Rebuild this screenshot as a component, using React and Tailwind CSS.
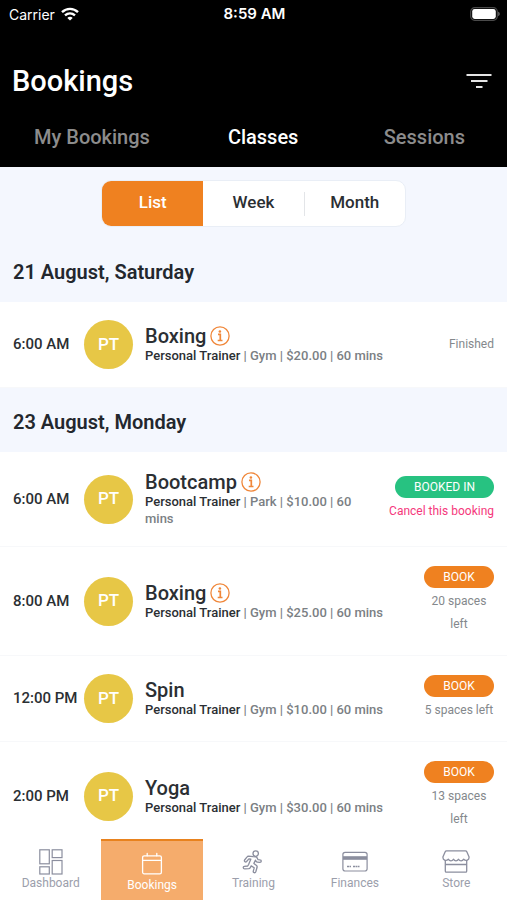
import React, { useState } from 'react';

const days = [
  {
    label: '21 August, Saturday',
    classes: [
      { time: '6:00 AM', name: 'Boxing', info: true, place: 'Gym', price: '$20.00', status: 'finished' },
    ],
  },
  {
    label: '23 August, Monday',
    classes: [
      { time: '6:00 AM', name: 'Bootcamp', info: true, place: 'Park', price: '$10.00', status: 'booked' },
      { time: '8:00 AM', name: 'Boxing', info: true, place: 'Gym', price: '$25.00', status: 'open', spaces: 20 },
      { time: '12:00 PM', name: 'Spin', place: 'Gym', price: '$10.00', status: 'open', spaces: 5 },
      { time: '2:00 PM', name: 'Yoga', place: 'Gym', price: '$30.00', status: 'open', spaces: 13 },
    ],
  },
];

const WifiIcon = () => (
  <svg width="18" height="14" viewBox="0 0 18 14" fill="none" stroke="white" strokeWidth="2.4" aria-hidden="true">
    <path d="M1 5.2C5.6.8 12.4.8 17 5.2" />
    <path d="M4 8.4c3-2.7 7-2.7 10 0" />
    <path d="M9 13.6 6.3 10.9c1.5-1.4 3.9-1.4 5.4 0z" fill="white" stroke="none" />
  </svg>
);

const BatteryIcon = () => (
  <svg width="30" height="14" viewBox="0 0 30 14" fill="none" aria-hidden="true">
    <rect x="0.7" y="0.7" width="26.6" height="12.6" rx="4" stroke="#4a4a4a" strokeWidth="1.2" />
    <rect x="2.2" y="2" width="23.6" height="10" rx="2.4" fill="white" />
    <path d="M28.2 4.8c2 .6 2 3.8 0 4.4z" fill="#6b6b6b" />
  </svg>
);

const FilterIcon = () => (
  <svg width="26" height="16" viewBox="0 0 26 16" fill="none" stroke="#e5e5e5" strokeWidth="1.9" aria-hidden="true">
    <path d="M0.5 2h25M5 8h16.5M10 14h6.5" />
  </svg>
);

const InfoIcon = () => (
  <svg width="20" height="20" viewBox="0 0 20 20" fill="none" stroke="#f0873a" aria-hidden="true">
    <circle cx="10" cy="10" r="9.1" strokeWidth="1.3" />
    <circle cx="9.9" cy="5.5" r="1.3" fill="#f0873a" stroke="none" />
    <path d="M8 8.4h2.3v6M7.7 14.5h4.8" strokeWidth="1.7" />
  </svg>
);

const DashboardIcon = () => (
  <svg width="26" height="26" viewBox="0 0 26 26" fill="none" stroke="#8b8e9e" strokeWidth="1.2" aria-hidden="true">
    <rect x="1.8" y="0.8" width="9.5" height="14" />
    <rect x="14.2" y="0.8" width="9.8" height="7.8" />
    <rect x="1.8" y="17.8" width="9.5" height="7.2" />
    <rect x="14.2" y="11.5" width="9.8" height="13.5" />
  </svg>
);

const CalendarIcon = () => (
  <svg width="26" height="26" viewBox="0 0 26 26" fill="none" stroke="white" strokeWidth="1.3" strokeLinecap="round" aria-hidden="true">
    <rect x="3.6" y="4.8" width="18.8" height="18" rx="1.6" />
    <path d="M3.6 9.4h18.8M8.2 2.4v2.4M17.8 2.4v2.4" />
  </svg>
);

const RunnerIcon = () => (
  <svg width="26" height="26" viewBox="0 0 26 26" fill="none" stroke="#8b8e9e" strokeWidth="1.3" strokeLinecap="round" strokeLinejoin="round" aria-hidden="true">
    <circle cx="15.7" cy="4.6" r="2.7" />
    <path d="M13 7.7 8.600 7.200c-.8 0-1.300.3-1.700.9L4.600 11c-.8 1.400 1 2.600 2 1.500l2.300-2.700 2 .3-2.200 5.200-1 1.700-3.300.3c-1.700.3-1.500 2.600.3 2.600l4.100-.3c.7-.1 1.100-.4 1.500-1l.9-1.700 3 1.900-.9 3.300c-.4 1.700 1.900 2.300 2.500.7l1.300-4.500c.2-.8 0-1.300-.6-1.800l-2.600-2.100 1.500-3.200.7 1.200c.3.5.7.7 1.300.7l2.600.2c1.600 0 1.700-2.300.1-2.400l-2-.2-1.300-2.300c-.4-.6-1-.7-3.800-.7z" />
  </svg>
);

const CardIcon = () => (
  <svg width="26" height="26" viewBox="0 0 26 26" fill="none" stroke="#8b8e9e" strokeWidth="1.2" aria-hidden="true">
    <rect x="0.9" y="3.4" width="24.2" height="18.6" rx="2.2" />
    <rect x="1" y="7.2" width="24" height="3.6" fill="#8b8e9e" stroke="none" />
    <path d="M5 17.5h4M11 17.5h6.5" strokeDasharray="2 .5" strokeWidth="1.3" />
  </svg>
);

const StoreIcon = () => (
  <svg width="28" height="26" viewBox="0 0 28 26" fill="none" stroke="#8b8e9e" strokeWidth="1.3" strokeLinejoin="round" aria-hidden="true">
    <path d="M4.5 1.8h19c.8 0 1 .2 1.300.9l2.200 5c.5 3.200-3 5-5.300 2.500-1.300 2.200-3.900 2.200-5.100 0-1.300 2.200-3.900 2.200-5.200 0-1.200 2.200-3.800 2.200-5.100 0C4 12.700.5 10.900 1 7.700l2.200-5c.3-.7.500-.9 1.300-.9z" />
    <path d="M3.3 11.5V22c0 .8.300 1.200 1 1.200h19.400c.7 0 1-.4 1-1.200V11.500M3.300 15.500h21.400" />
  </svg>
);

const navItems = [
  { label: 'Dashboard', Icon: DashboardIcon },
  { label: 'Bookings', Icon: CalendarIcon },
  { label: 'Training', Icon: RunnerIcon },
  { label: 'Finances', Icon: CardIcon },
  { label: 'Store', Icon: StoreIcon },
];

const ClassAction = ({ item }) => {
  if (item.status === 'finished') {
    return <div className="text-[12px] leading-[17px] text-[#84888c]">Finished</div>;
  }

  if (item.status === 'booked') {
    return (
      <div className="flex flex-col items-end gap-0.5 py-px">
        <span className="h-[22px] w-[99px] rounded-full bg-[#27c281] text-center text-[12px] leading-[22px] text-white">
          BOOKED IN
        </span>
        <button type="button" className="text-[12px] leading-[23px] whitespace-nowrap text-[#f5387c]">
          Cancel this booking
        </button>
      </div>
    );
  }

  return (
    <div className="flex w-[70px] flex-col gap-0.5 py-px">
      <button type="button" className="h-[22px] rounded-full bg-[#ef8120] text-[12px] leading-[22px] text-white">
        BOOK
      </button>
      <p className="text-center text-[12px] leading-[23px] text-[#84888c]">{`${item.spaces} spaces left`}</p>
    </div>
  );
};

const ClassRow = ({ item }) => (
  <li className="flex items-center border-b border-[#f7f8fa] bg-white px-[13px] py-[18px]">
    <time className="w-[71px] shrink-0 text-[15px] font-medium whitespace-nowrap text-[#2b2f33]">{item.time}</time>
    <div className="flex size-[49px] shrink-0 items-center justify-center rounded-full bg-[#e7c746] text-[17px] font-medium text-white">
      PT
    </div>
    <div className="ml-3 min-w-0 flex-1 py-px">
      <h3 className="flex h-[22px] items-center gap-1 text-[20px] font-medium text-[#2b2f33]">
        {item.name}
        {item.info && (
          <button type="button" aria-label={`About ${item.name}`}>
            <InfoIcon />
          </button>
        )}
      </h3>
      <p className="text-[13px] leading-[17px] font-medium text-[#7b7f84]">
        <span className="text-[#2b2f33]">Personal Trainer</span>
        {` | ${item.place} | ${item.price} | 60 mins`}
      </p>
    </div>
    <div className="ml-2 shrink-0">
      <ClassAction item={item} />
    </div>
  </li>
);

const App = () => {
  const [view, setView] = useState('List');
  const [activeNav, setActiveNav] = useState('Bookings');

  return (
    <div className="flex h-screen flex-col bg-[#f4f7fe] font-[Roboto,sans-serif]">
      <header className="shrink-0 bg-black text-white">
        <div className="grid h-7 grid-cols-3 items-center pr-[7px] pl-[9px] font-[Inter,sans-serif] text-[14px]">
          <div className="flex items-center gap-1.5">
            Carrier <WifiIcon />
          </div>
          <div className="text-center text-[15px] font-semibold">8:59 AM</div>
          <div className="flex justify-end">
            <BatteryIcon />
          </div>
        </div>
        <div className="flex items-center justify-between pt-8 pr-[15px] pl-3">
          <h1 className="text-[29px] leading-[42px] font-medium">Bookings</h1>
          <button type="button" aria-label="Filter">
            <FilterIcon />
          </button>
        </div>
        <nav className="flex gap-[78px] pt-5 pr-[42px] pb-[15px] pl-[34px] text-[20px] leading-[30px] font-medium text-[#8c8c8c]">
          <a href="#my-bookings">My Bookings</a>
          <a href="#classes" className="text-white">Classes</a>
          <a href="#sessions" className="ml-auto">Sessions</a>
        </nav>
      </header>

      <main className="min-h-0 flex-1 overflow-y-auto [scrollbar-width:none]">
        <div className="flex justify-center pt-[13px] pb-[11px]">
          <div className="grid h-[47px] w-3/5 grid-cols-3 overflow-hidden rounded-[10px] border border-[#e9eef6] bg-white text-[17px] font-medium text-[#2b2f33]">
            {['List', 'Week', 'Month'].map((name) => (
              <button
                key={name}
                type="button"
                onClick={() => setView(name)}
                className={view === name ? 'flex items-center bg-[#ef8120] text-white' : 'flex items-center'}
              >
                {name === 'Month' && <span className="h-6 w-px bg-[#e3e5e8]" />}
                <span className="flex-1 pb-0.5">{name}</span>
              </button>
            ))}
          </div>
        </div>

        {days.map((day) => (
          <section key={day.label}>
            <h2 className="flex h-16 items-center px-[13px] pt-1 text-[20px] font-semibold text-[#23272e]">{day.label}</h2>
            <ul>
              {day.classes.map((item) => (
                <ClassRow key={item.time} item={item} />
              ))}
            </ul>
          </section>
        ))}
      </main>

      <nav className="grid h-[61px] shrink-0 grid-cols-5 bg-white text-[12px] leading-[16px] text-[#9b9eab]">
        {navItems.map(({ label, Icon }) => (
          <button
            key={label}
            type="button"
            onClick={() => setActiveNav(label)}
            className={
              activeNav === label
                ? 'flex flex-col items-center border-t-2 border-[#e8821e] bg-[#f5ac6c] pt-2.5 text-white'
                : 'flex flex-col items-center pt-2.5'
            }
          >
            <Icon />
            {label}
          </button>
        ))}
      </nav>
    </div>
  );
};

export default App;
